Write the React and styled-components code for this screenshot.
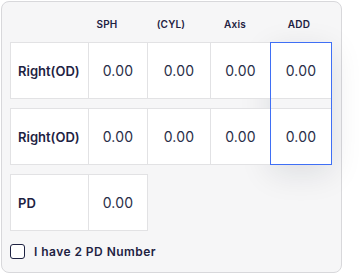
import styled, { createGlobalStyle } from "styled-components";

const GlobalStyle = createGlobalStyle`
  body {
    margin: 0;
    background: #fff;
    font-family: Inter, "Noto Sans", sans-serif;
    color: #1e2242;
  }
`;

const Card = styled.div`
  box-sizing: border-box;
  margin: 1px 0 0 1px;
  width: 341px;
  height: 272px;
  padding: 0 8px;
  border: 1px solid #d8d8db;
  border-radius: 8px;
  background: #f6f6f7;
`;

const Header = styled.div`
  display: grid;
  grid-template-columns: 65px repeat(4, 64px);
  height: 40px;
  align-items: center;
`;

const HeadCell = styled.div`
  text-align: center;
  font-size: 10px;
  font-weight: 600;
  letter-spacing: 0.2px;
  color: #1e2242;
  padding-top: 4px;
`;

const Table = styled.div`
  position: relative;
  isolation: isolate;
  display: flex;
  flex-direction: column;
  align-items: flex-start;
  gap: 9px;
`;

const Row = styled.div`
  position: relative;
  z-index: 1;
  display: grid;
  grid-template-columns: ${(p) => (p.$short ? "77px 58px" : "77px 58px 62px 59px 60px")};
  gap: 1px;
  height: 57px;
  box-sizing: border-box;
  border: 1px solid #e2e2e4;
  background: #e2e2e4;
`;

const Cell = styled.div`
  background: #fff;
  display: flex;
  align-items: center;
  justify-content: center;
  font-size: 14px;
  font-weight: 400;
  letter-spacing: 0.2px;
  color: #2a2e48;
`;

const LabelCell = styled(Cell)`
  justify-content: flex-start;
  padding-left: 7px;
  font-size: 13px;
  font-weight: 600;
  letter-spacing: 0;
  color: #1e2242;
`;

const AddHighlight = styled.div`
  position: absolute;
  left: 260px;
  top: 0;
  width: 62px;
  height: 123px;
  pointer-events: none;

  &::before {
    content: "";
    position: absolute;
    inset: 0;
    z-index: 0;
    box-shadow: 0 8px 32px rgba(20, 24, 50, 0.11);
  }

  &::after {
    content: "";
    position: absolute;
    inset: 0;
    z-index: 2;
    border: 1px solid #3f6ff5;
  }
`;

const CheckRow = styled.label`
  display: flex;
  align-items: center;
  gap: 9px;
  margin-top: 13px;
  font-size: 12px;
  font-weight: 600;
  letter-spacing: 0.45px;
  color: #1e2242;
`;

const Box = styled.span`
  box-sizing: border-box;
  width: 15px;
  height: 15px;
  border: 1.5px solid #1e2242;
  border-radius: 3px;
  background: #fff;
`;

const heads = ["SPH", "(CYL)", "Axis", "ADD"];
const rows = ["Right(OD)", "Right(OD)"];

export default function App() {
  return (
    <>
      <GlobalStyle />
      <Card>
        <Header>
          <span />
          {heads.map((h) => (
            <HeadCell key={h}>{h}</HeadCell>
          ))}
        </Header>
        <Table>
          {rows.map((label, i) => (
            <Row key={i}>
              <LabelCell>{label}</LabelCell>
              {heads.map((h) => (
                <Cell key={h}>0.00</Cell>
              ))}
            </Row>
          ))}
          <Row $short>
            <LabelCell>PD</LabelCell>
            <Cell>0.00</Cell>
          </Row>
          <AddHighlight />
        </Table>
        <CheckRow>
          <Box />
          I have 2 PD Number
        </CheckRow>
      </Card>
    </>
  );
}
